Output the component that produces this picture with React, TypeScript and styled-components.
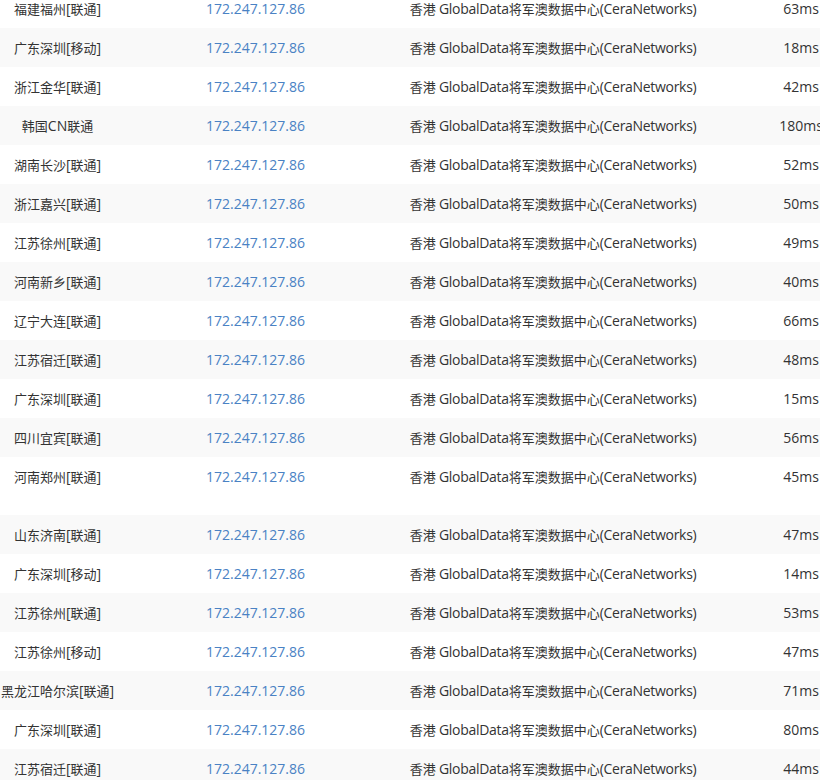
import React from "react";
import styled, { createGlobalStyle } from "styled-components";

const Global = createGlobalStyle`
  html, body { margin: 0; padding: 0; background: #fff; overflow: hidden; }
  body { width: 820px; height: 780px; }
`;

const Table = styled.div`
  width: 892px;
  margin-top: -11px;
  font-family: "Open Sans", "Noto Sans CJK SC", sans-serif;
  font-size: 14px;
  color: #333;
`;

const Row = styled.div<{ $striped: boolean; $tall?: boolean }>`
  display: grid;
  grid-template-columns: 115px 281px 314px 182px;
  height: 39px;
  align-items: center;
  padding-bottom: ${(p) => (p.$tall ? "19px" : "0")};
  background: ${(p) => (p.$striped ? "#f9f9f9" : "#fff")};
`;

const Cell = styled.div<{ $link?: boolean; $tight?: boolean }>`
  text-align: center;
  white-space: nowrap;
  line-height: 20px;
  letter-spacing: ${(p) => (p.$tight ? "-0.3px" : "0")};
  color: ${(p) => (p.$link ? "#4a82c4" : "#333")};
`;

const Han = styled.span`
  font-family: "Noto Sans CJK SC", sans-serif;
  font-size: 13px;
  letter-spacing: 0;
`;

function Mixed({ text }: { text: string }) {
  const parts = text.match(/[\u3400-\u9fff]+|[^\u3400-\u9fff]+/g) || [];
  return (
    <>
      {parts.map((p, i) =>
        /[\u3400-\u9fff]/.test(p) ? <Han key={i}>{p}</Han> : <React.Fragment key={i}>{p}</React.Fragment>
      )}
    </>
  );
}

const rows: [string, string][] = [
  ["福建福州[联通]", "63ms"],
  ["广东深圳[移动]", "18ms"],
  ["浙江金华[联通]", "42ms"],
  ["韩国CN联通", "180ms"],
  ["湖南长沙[联通]", "52ms"],
  ["浙江嘉兴[联通]", "50ms"],
  ["江苏徐州[联通]", "49ms"],
  ["河南新乡[联通]", "40ms"],
  ["辽宁大连[联通]", "66ms"],
  ["江苏宿迁[联通]", "48ms"],
  ["广东深圳[联通]", "15ms"],
  ["四川宜宾[联通]", "56ms"],
  ["河南郑州[联通]", "45ms"],
  ["山东济南[联通]", "47ms"],
  ["广东深圳[移动]", "14ms"],
  ["江苏徐州[联通]", "53ms"],
  ["江苏徐州[移动]", "47ms"],
  ["黑龙江哈尔滨[联通]", "71ms"],
  ["广东深圳[联通]", "80ms"],
  ["江苏宿迁[联通]", "44ms"],
];

export default function App() {
  return (
    <>
      <Global />
      <Table>
        {rows.map(([node, ms], i) => (
          <Row key={i} $striped={i % 2 === 1} $tall={i === 12}>
            <Cell>
              <Mixed text={node} />
            </Cell>
            <Cell $link>172.247.127.86</Cell>
            <Cell $tight>
              <Mixed text="香港 GlobalData将军澳数据中心(CeraNetworks)" />
            </Cell>
            <Cell>{ms}</Cell>
          </Row>
        ))}
      </Table>
    </>
  );
}
